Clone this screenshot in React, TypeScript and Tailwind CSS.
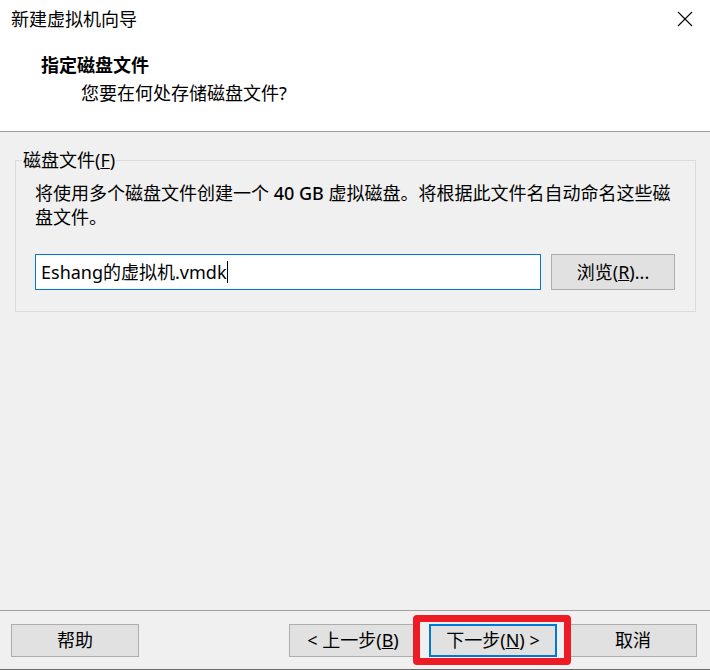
import React from 'react';

const font = { fontFamily: '"Noto Sans", "Noto Sans CJK SC", sans-serif' };

const WinButton: React.FC<{ children: React.ReactNode; primary?: boolean }> = ({ children, primary }) => (
    <div
        className={`w-[128px] h-[33px] flex items-center justify-center bg-[#e1e1e1] text-[18px] text-black ${
            primary ? 'border-2 border-[#0078d7]' : 'border border-[#adadad]'
        }`}
    >
        {children}
    </div>
);

export default function App() {
    return (
        <div className="w-[710px] h-[670px] flex flex-col bg-[#f0f0f0] text-black" style={font}>
            {/* 标题区 */}
            <div className="h-[132px] bg-white border-b border-[#a0a0a0] flex flex-col">
                <div className="h-[38px] flex items-center justify-between pl-[11px] pr-[17px]">
                    <span className="text-[18px] leading-[24px]">新建虚拟机向导</span>
                    <svg width="16" height="16" viewBox="0 0 16 16">
                        <path d="M1 1 L15 15 M15 1 L1 15" stroke="#000" strokeWidth="1.1" />
                    </svg>
                </div>
                <div className="mt-[15px] pl-[41px] text-[18px] leading-[24px] font-bold">指定磁盘文件</div>
                <div className="mt-[4px] pl-[81px] text-[18px] leading-[24px]">您要在何处存储磁盘文件?</div>
            </div>

            {/* 内容区 */}
            <div className="flex-1">
                <fieldset className="mt-[16px] mx-[15px] border border-[#dcdcdc] px-[20px] pt-[9px] pb-[21px]">
                    <legend className="ml-[-14px] px-[1px] text-[18px] leading-[24px]">
                        磁盘文件(<span className="underline">F</span>)
                    </legend>
                    <div className="text-[18px] leading-[24px] whitespace-nowrap -ml-[1px]">
                        将使用多个磁盘文件创建一个 <span className="font-medium">40 GB</span> 虚拟磁盘。将根据此文件名自动命名这些磁
                        <br />
                        盘文件。
                    </div>
                    <div className="mt-[25px] flex items-center gap-[10px] -ml-[1px]">
                        <div className="w-[506px] h-[36px] border border-[#0078d7] bg-white flex items-center pl-[5px] text-[18px]">
                            <span>Eshang的虚拟机.vmdk</span>
                            <span className="w-[1px] h-[22px] bg-black"></span>
                        </div>
                        <div className="w-[124px] h-[36px] flex items-center justify-center bg-[#e1e1e1] border border-[#adadad] text-[18px]">
                            浏览(<span className="underline">R</span>)...
                        </div>
                    </div>
                </fieldset>
            </div>

            {/* 底部按钮 */}
            <div className="h-[60px] border-t border-[#a0a0a0] border-b border-b-[#6a6a6a] pt-[13px] pl-[11px] pr-[13px] flex items-start">
                <WinButton>帮助</WinButton>
                <div className="ml-auto flex gap-[12px]">
                    <WinButton>&lt; 上一步(<span className="underline">B</span>)</WinButton>
                    <div className="relative">
                        <WinButton primary>
                            下一步(<span className="underline">N</span>) &gt;
                        </WinButton>
                        <div className="absolute -left-[16px] -top-[9px] -right-[14px] -bottom-[8px] border-[7px] border-[#ed1c24] rounded-[4px]"></div>
                    </div>
                    <WinButton>取消</WinButton>
                </div>
            </div>
        </div>
    );
}
